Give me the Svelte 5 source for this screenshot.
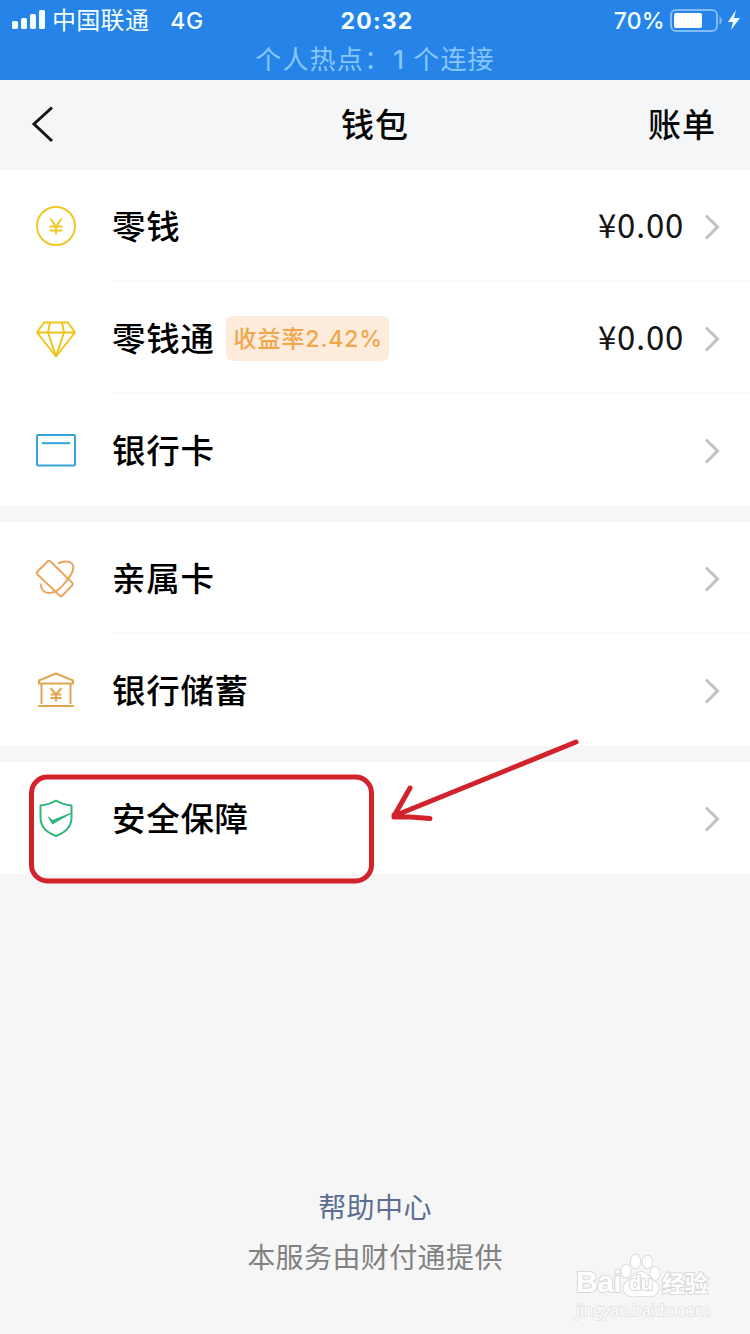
<script>
  const groups = [
    [
      { icon: 'coin', label: '零钱', amount: '¥0.00' },
      { icon: 'gem', label: '零钱通', tag: '收益率2.42%', amount: '¥0.00' },
      { icon: 'card', label: '银行卡' }
    ],
    [
      { icon: 'family', label: '亲属卡' },
      { icon: 'bank', label: '银行储蓄' }
    ],
    [{ icon: 'shield', label: '安全保障' }]
  ];
</script>

{#snippet glyph(name)}
  <svg class="icon {name}" viewBox="0 0 48 48" width="48" height="48">
    {#if name === 'coin'}
      <circle cx="24" cy="24" r="19" />
      <path d="M18.500 16.500l5.500 8 5.500-8M17.500 24.500h13M17.500 28.500h13M24 24.500v8" />
    {:else if name === 'gem'}
      <path d="M12 8.500h24l7 10-19 24-19-24zM5 18.500h38M18 8.500l-2 10 8 24 8-24-2-10" />
    {:else if name === 'card'}
      <rect x="5" y="9" width="38" height="30.500" rx="1" />
      <path d="M10 17.200h28" />
    {:else if name === 'family'}
      <path d="M15.500 7.500Q17 6 18.500 7.500L40 28.500Q41.500 30 40 31.500L30.500 41.500Q29 43 27.500 41.500L5.500 20.500Q4 19 5.500 17.500z" />
      <path d="M26 9.500C31 7 37 6.500 40 9.500c4 5-1 12-6 18-5 7-10 11-16 11.500-6 .500-9-4-9.500-9.500" />
    {:else if name === 'bank'}
      <path d="M7 17.500v-3L24 7.500l17 7v3zM9.500 18v20M38.500 18v20M6 40h36" />
      <path d="M18.500 22l5.500 6.500 5.500-6.500M18.500 28.500h11M18.500 32h11M24 28.500v7" />
    {:else if name === 'shield'}
      <path d="M24 6.500c5 3 10 4.500 15.500 5v12c0 9-6 15-15.500 18.500C14.500 38.500 8.500 32.500 8.500 23.500v-12C14 11 19 9.500 24 6.500z" />
      <path class="check" d="M16.500 23l4 3.500 19-7.500-19 11z" />
    {/if}
  </svg>
{/snippet}

<div class="page">
  <header class="status">
    <div class="status-row">
      <div class="carrier">
        <svg width="34" height="22" viewBox="0 0 34 22" fill="#f3ffff">
          <rect x="0" y="12" width="6" height="8" rx="1.500" />
          <rect x="9" y="9" width="6" height="11" rx="1.500" />
          <rect x="18" y="5" width="6" height="15" rx="1.500" />
          <rect x="27" y="1" width="6" height="19" rx="1.500" />
        </svg>
        <span class="operator">中国联通</span>
        <span class="network">4G</span>
      </div>
      <span class="time">20:32</span>
      <div class="power">
        <span>70%</span>
        <svg width="72" height="26" viewBox="0 0 72 26">
          <rect x="3" y="3" width="46" height="21" rx="5" fill="none" stroke="#80bdf6" stroke-width="2" />
          <rect x="6" y="6" width="28" height="15" rx="2" fill="#fff" />
          <path d="M52 10q3 3.500 0 7z" fill="#80bdf6" stroke="#80bdf6" />
          <path d="M68 3l-8 12h5l-2 8 9-12h-6z" fill="#f3ffff" />
        </svg>
      </div>
    </div>
    <div class="hotspot"><span>个人热点：</span><b>1</b><span>个连接</span></div>
  </header>

  <nav>
    <svg width="30" height="40" viewBox="0 0 30 40" fill="none" stroke="#161616" stroke-width="3">
      <path d="M24 2.500L6 19l18 17" />
    </svg>
    <h1>钱包</h1>
    <span class="bill">账单</span>
  </nav>

  <main>
    {#each groups as rows}
      <section>
        {#each rows as row}
          <div class="row">
            {@render glyph(row.icon)}
            <div class="content">
              <span class="label">{row.label}</span>
              {#if row.tag}<span class="tag">{row.tag}</span>{/if}
              {#if row.amount}<span class="amount">{row.amount}</span>{/if}
              <svg class="chevron" width="20" height="30" viewBox="0 0 20 30">
                <path d="M3 3.500L14.500 15 3 26.500" />
              </svg>
            </div>
          </div>
        {/each}
      </section>
    {/each}
    <svg class="annotation" width="560" height="150" viewBox="0 0 560 150">
      <rect x="3.500" y="39" width="340" height="104" rx="16" />
      <path d="M548 4L366 78l16-28M366 77v2l16 0 20 1.500" />
    </svg>
  </main>

  <footer>
    <span class="help">帮助中心</span>
    <span class="provider">本服务由财付通提供</span>
  </footer>

  <div class="watermark">
    <div class="brand">
      <span class="bai">Bai</span>
      <span class="paw">
        <svg width="38" height="44" viewBox="0 0 38 44">
          <ellipse cx="4" cy="17" rx="4.800" ry="6.500" />
          <ellipse cx="13.500" cy="7.500" rx="4.800" ry="7" />
          <ellipse cx="25.500" cy="8" rx="4.800" ry="6.500" />
          <ellipse cx="33" cy="19.500" rx="4.800" ry="6.500" />
          <path d="M19 18c-6 0-8 5-12 8-6 4-7 9-4 13 4 5 10 3 16 3s12 2 16-3c3-4 2-9-4-13-4-3-6-8-12-8z" />
        </svg>
        <span class="du">du</span>
      </span>
      <span class="exp">经验</span>
    </div>
    <div class="site">jingyan.baidu.com</div>
  </div>
</div>

<style>
  :global(body) { margin: 0; }
  .page {
    position: relative;
    width: 750px;
    height: 1334px;
    overflow: hidden;
    display: flex;
    flex-direction: column;
    background: #f6f6f6;
    font-family: Inter, "Noto Sans CJK SC", sans-serif;
    color: #080808;
  }
  svg { display: block; flex: none; }
  .status {
    height: 80px;
    background: #2683e8;
    color: #f3ffff;
  }
  .status-row {
    height: 40px;
    display: grid;
    grid-template-columns: 1fr auto 1fr;
    align-items: center;
    font-size: 23px;
    line-height: 40px;
  }
  .status-row span { padding-top: 2px; line-height: 38px; }
  .carrier { display: flex; align-items: center; padding-left: 12px; }
  .operator { font-size: 24px; margin-left: 6px; letter-spacing: .3px; }
  .network { margin-left: 21px; font-weight: 500; letter-spacing: .8px; }
  .time { font-weight: 700; letter-spacing: 1.2px; padding-left: 4px; }
  .power { display: flex; align-items: center; justify-content: flex-end; gap: 3px; font-weight: 500; padding-right: 10px; letter-spacing: .3px; }
  .hotspot {
    display: flex;
    justify-content: center;
    color: #86c6fb;
    font-size: 26px;
    line-height: 40px;
    letter-spacing: 1.2px;
  }
  .hotspot b { font-weight: 500; margin: 0 8px 0 2px; }
  nav {
    height: 90px;
    display: grid;
    grid-template-columns: 1fr auto 1fr;
    align-items: center;
    padding: 0 34px 0 28px;
    box-sizing: border-box;
    background: #f5f6f7;
    font-size: 33px;
    line-height: 88px;
    font-weight: 500;
    letter-spacing: 1px;
  }
  h1 { margin: 0; font: inherit; padding-left: 6px; }
  .bill { justify-self: end; }
  main { position: relative; display: flex; flex-direction: column; gap: 16px; }
  section { background: #fff; }
  .row { height: 112px; display: flex; align-items: center; padding-left: 32px; }
  .content {
    flex: 1;
    height: 112px;
    margin-left: 32px;
    display: flex;
    align-items: center;
    box-sizing: border-box;
    border-bottom: 2px solid #f8f8f8;
    padding: 4px 27px 0 0;
  }
  .row:last-child .content { border-bottom-color: transparent; }
  .label { font-size: 33.500px; font-weight: 500; letter-spacing: .7px; line-height: 48px; color: #000; }
  .tag {
    margin: -2px 0 0 11px;
    height: 45px;
    line-height: 47px;
    box-sizing: border-box;
    padding: 0 6px 0 8px;
    border-radius: 6px;
    background: #fdecdc;
    color: #f0a64a;
    font-size: 23px;
    font-weight: 500;
    letter-spacing: .9px;
  }
  .amount { margin: -6px 0 0 auto; font-family: "Noto Sans CJK SC", sans-serif; font-size: 33px; line-height: 48px; letter-spacing: .7px; color: #151515; }
  .chevron { margin-left: auto; fill: none; stroke: #c2c2c2; stroke-width: 3; }
  .amount + .chevron { margin-left: 19px; }
  .icon { fill: none; stroke-width: 2; stroke-linejoin: round; }
  .coin { stroke: #eec928; }
  .gem { stroke: #eec51f; }
  .card { stroke: #36a4da; }
  .family { stroke: #e9a65e; }
  .bank { stroke: #dfa64f; }
  .shield { stroke: #30b77b; }
  .check { fill: #30b77b; stroke-width: 1; }
  .annotation {
    position: absolute;
    left: 28px;
    top: 568px;
    fill: none;
    stroke: #d2232c;
    stroke-width: 5;
    stroke-linecap: round;
    stroke-linejoin: round;
  }
  footer {
    margin-top: auto;
    height: 152px;
    display: flex;
    flex-direction: column;
    align-items: center;
    letter-spacing: .4px;
  }
  .help { font-size: 28px; line-height: 52px; color: #5c6e91; }
  .provider { font-size: 28px; line-height: 48px; color: #818181; }
  .watermark { position: absolute; left: 576px; top: 1251px; width: 142px; color: #fff; }
  .brand { display: flex; align-items: flex-end; height: 47px; -webkit-text-stroke: 2px #d8d8d8; paint-order: stroke fill; }
  .bai { width: 46px; font: 700 30px/32px "Liberation Sans", sans-serif; letter-spacing: -.5px; }
  .paw { position: relative; }
  .paw svg { fill: #fff; stroke: #d4d4d4; stroke-width: 1.500; overflow: visible; }
  .du { position: absolute; left: 7px; bottom: 4px; font: 700 20px/22px "Liberation Sans", sans-serif; letter-spacing: -.5px; }
  .exp { margin-left: 2px; font-size: 23px; font-weight: 700; line-height: 28px; }
  .site { font: 16.500px/23px "Open Sans", sans-serif; -webkit-text-stroke: 1.500px #dedede; paint-order: stroke fill; letter-spacing: -.4px; }
</style>
